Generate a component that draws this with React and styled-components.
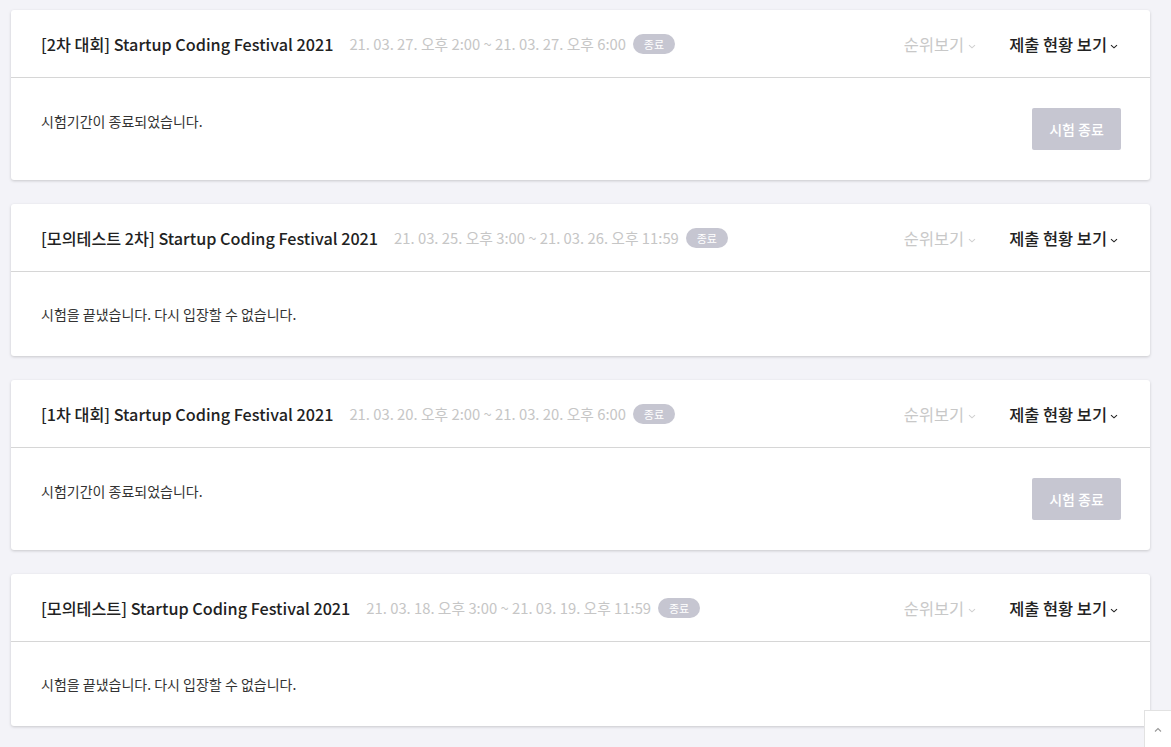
import styled, { createGlobalStyle } from "styled-components";

const Global = createGlobalStyle`
  body {
    margin: 0;
    background: #f3f3f8;
    font-family: "Noto Sans CJK KR", "Noto Sans", sans-serif;
    color: #222;
  }
`;

const Page = styled.div`
  display: flex;
  flex-direction: column;
  gap: 24px;
  padding: 10px 21px 22px 11px;
`;

const Card = styled.section`
  background: #fff;
  border-radius: 3px;
  box-shadow: 0 1px 3px rgba(0, 0, 0, 0.18);
`;

const Header = styled.div`
  display: flex;
  align-items: center;
  height: 67px;
  padding: 0 32px 0 30px;
  border-bottom: 1px solid #d6d6d6;
`;

const Title = styled.h3`
  margin: 0;
  font-size: 16.2px;
  font-weight: 500;
  color: #222;
`;

const Period = styled.span`
  margin-left: 16px;
  font-size: 14.8px;
  color: #c6c6c6;
`;

const Badge = styled.span`
  margin-left: 7px;
  display: inline-flex;
  align-items: center;
  justify-content: center;
  width: 42px;
  height: 20px;
  border-radius: 10px;
  background: #c6c6d1;
  color: #fff;
  font-size: 11px;
`;

const Links = styled.div`
  margin-left: auto;
  display: flex;
  align-items: center;
  gap: 33px;
`;

const Toggle = styled.span`
  display: inline-flex;
  align-items: center;
  gap: ${(p) => (p.$active ? "3px" : "4px")};
  font-size: 16.4px;
  font-weight: ${(p) => (p.$active ? 500 : 400)};
  color: ${(p) => (p.$active ? "#222" : "#c8c8c8")};

  svg {
    margin-top: 5px;
  }
`;

const Body = styled.div`
  display: flex;
  justify-content: space-between;
  align-items: flex-start;
  padding: ${(p) => (p.$button ? "30px 29px 30px 30px" : "32px 30px 32px 30px")};
`;

const Message = styled.p`
  margin: ${(p) => (p.$button ? "3px 0 0" : "0")};
  font-size: 14px;
  line-height: 20px;
  color: #333;
`;

const EndButton = styled.button`
  width: 89px;
  height: 42px;
  border: 0;
  border-radius: 2px;
  background: #c6c6d1;
  color: #fff;
  font-family: inherit;
  font-size: 14px;
  font-weight: 500;
`;

const TopButton = styled.button`
  position: fixed;
  right: 0;
  bottom: 0;
  width: 27px;
  height: 37px;
  border: 1px solid #e2e2e2;
  border-right: 0;
  border-bottom: 0;
  background: #fff;
  color: #999;
  padding: 0;
  display: flex;
  align-items: center;
  justify-content: center;
`;

function Chevron({ up, color }) {
  return (
    <svg width="8" height="5" viewBox="0 0 8 5" fill="none">
      <path
        d={up ? "M1 4.5L4 1.5L7 4.5" : "M1 1.2L4 3.8L7 1.2"}
        stroke={color}
        strokeWidth="1.1"
      />
    </svg>
  );
}

const contests = [
  {
    title: "[2차 대회] Startup Coding Festival 2021",
    period: "21. 03. 27. 오후 2:00 ~ 21. 03. 27. 오후 6:00",
    ended: true,
  },
  {
    title: "[모의테스트 2차] Startup Coding Festival 2021",
    period: "21. 03. 25. 오후 3:00 ~ 21. 03. 26. 오후 11:59",
    ended: false,
  },
  {
    title: "[1차 대회] Startup Coding Festival 2021",
    period: "21. 03. 20. 오후 2:00 ~ 21. 03. 20. 오후 6:00",
    ended: true,
  },
  {
    title: "[모의테스트] Startup Coding Festival 2021",
    period: "21. 03. 18. 오후 3:00 ~ 21. 03. 19. 오후 11:59",
    ended: false,
  },
];

export default function App() {
  return (
    <>
      <Global />
      <Page>
        {contests.map((c, i) => (
          <Card key={i}>
            <Header>
              <Title>{c.title}</Title>
              <Period>{c.period}</Period>
              <Badge>종료</Badge>
              <Links>
                <Toggle>
                  순위보기
                  <Chevron color="#d0d0d0" />
                </Toggle>
                <Toggle $active>
                  제출 현황 보기
                  <Chevron color="#222" />
                </Toggle>
              </Links>
            </Header>
            <Body $button={c.ended}>
              <Message $button={c.ended}>
                {c.ended
                  ? "시험기간이 종료되었습니다."
                  : "시험을 끝냈습니다. 다시 입장할 수 없습니다."}
              </Message>
              {c.ended && <EndButton>시험 종료</EndButton>}
            </Body>
          </Card>
        ))}
      </Page>
      <TopButton>
        <Chevron up color="#999" />
      </TopButton>
    </>
  );
}
